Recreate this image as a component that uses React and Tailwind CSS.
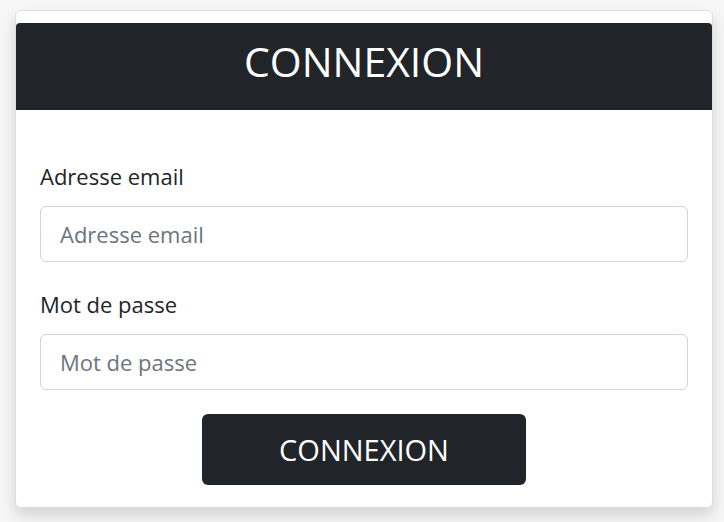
export default function App() {
    return (
        <div
            className="min-h-[522px] bg-[#f7f7f7] pt-[10px] pl-[15px]"
            style={{ fontFamily: '"Open Sans", "Noto Sans", sans-serif' }}
        >
            <div className="w-[698px] h-[498px] rounded-md border border-[#dedede] bg-white pt-3 shadow-[0_8px_16px_rgba(0,0,0,0.15)]">
                <div className="flex h-[87px] items-center justify-center rounded-t-[4px] bg-[#212529] pb-[10px]">
                    <h1 className="text-[41px] font-normal text-white">CONNEXION</h1>
                </div>
                <form className="px-6 pt-[55px]" onSubmit={(e) => e.preventDefault()}>
                    <label className="block text-[22px] leading-none text-[#212529]">
                        Adresse email
                    </label>
                    <input
                        type="email"
                        placeholder="Adresse email"
                        className="mt-[19px] block h-[56px] w-full rounded-[6px] border border-[#ced4da] px-[19px] text-[22px] text-[#495057] placeholder:text-[#6c757d]"
                    />
                    <label className="mt-[31px] block text-[22px] leading-none text-[#212529]">
                        Mot de passe
                    </label>
                    <input
                        type="password"
                        placeholder="Mot de passe"
                        className="mt-[19px] block h-[56px] w-full rounded-[6px] border border-[#ced4da] px-[19px] text-[22px] text-[#495057] placeholder:text-[#6c757d]"
                    />
                    <div className="mt-6 flex justify-center">
                        <button
                            type="submit"
                            className="h-[71px] w-[324px] rounded-[6px] bg-[#212529] text-[29px] text-white"
                        >
                            CONNEXION
                        </button>
                    </div>
                </form>
            </div>
        </div>
    );
}
